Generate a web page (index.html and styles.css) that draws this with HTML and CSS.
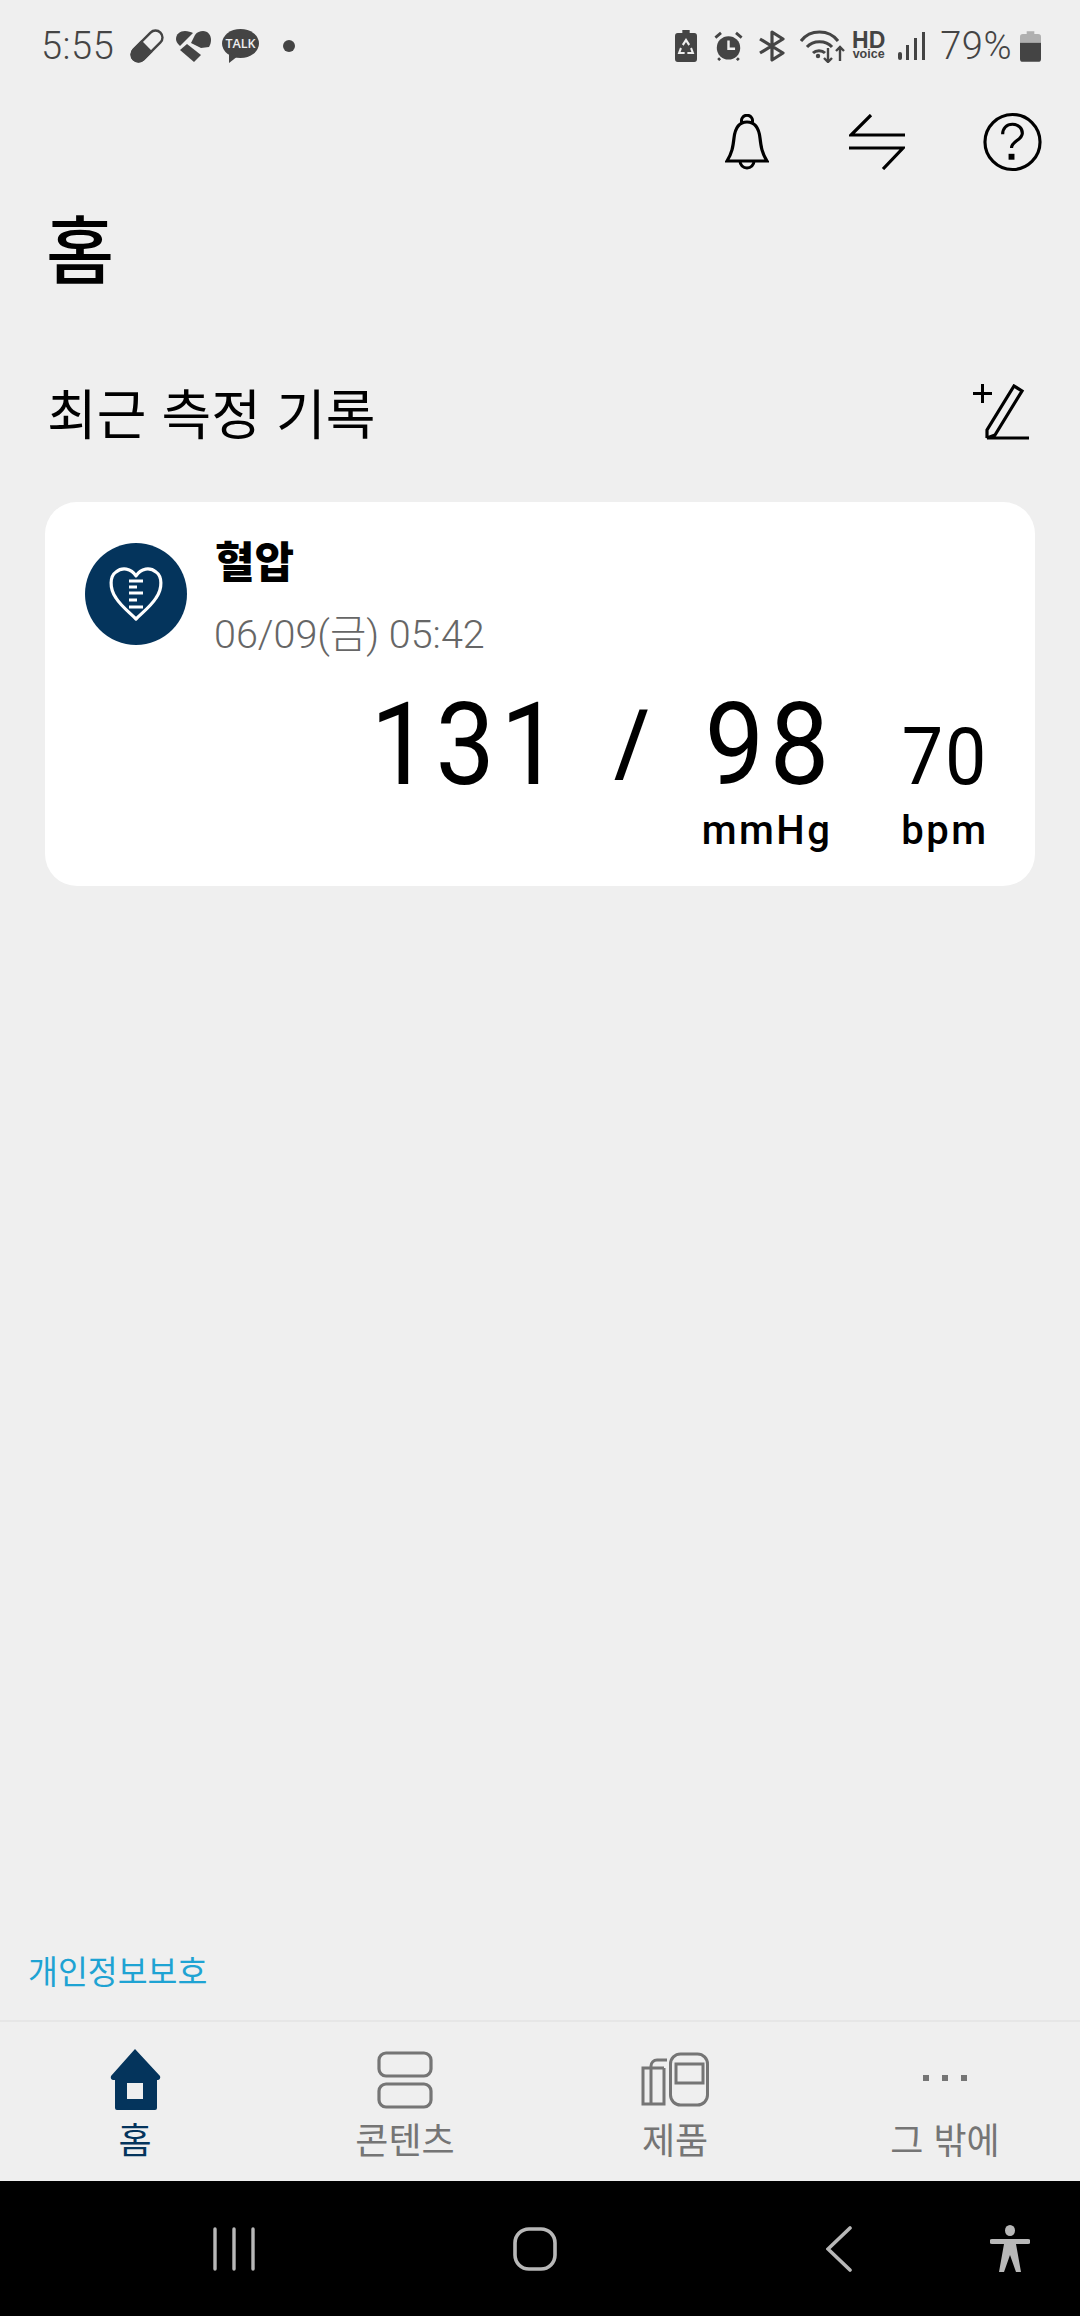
FILE: index.html
```html
<!DOCTYPE html>
<html lang="ko">
<head>
    <meta charset="UTF-8">
    <meta name="viewport" content="width=device-width, initial-scale=1.0">
    <title>홈</title>
    <link rel="stylesheet" href="styles.css">
</head>
<body>
    <div class="screen">
        <div class="status-bar">
            <div class="status-left">
                <span class="status-text">5:55</span>
                <svg class="st-pill" width="34" height="34" viewBox="0 0 34 34">
                    <g transform="rotate(45 17 17)">
                        <rect x="10" y="-2" width="14" height="38" rx="7" fill="none" stroke="#444" stroke-width="2.400"/>
                        <path d="M9 17h16v12a8 8 0 0 1-16 0z" fill="#444"/>
                    </g>
                </svg>
                <svg class="st-heart" width="35" height="31" viewBox="0 0 35 31">
                    <path d="M0 8C0 3 4 0 9 0c3 0 6 1 8 2L4 15C1 12 0 10 0 8z" fill="#444"/>
                    <path d="M19 4c2-3 5-4 8-4 5 0 8 4 8 9 0 3-1 5-2 7l-8 1-10-5z" fill="#444"/>
                    <path d="M4 19l7-6 14 11-7 7z" fill="#444"/>
                </svg>
                <svg class="st-talk" width="37" height="34" viewBox="0 0 37 34">
                    <ellipse cx="18.500" cy="14.500" rx="18.500" ry="14.500" fill="#444"/>
                    <path d="M7 24l0 10 9-7z" fill="#444"/>
                    <text x="18.500" y="19" text-anchor="middle" class="talk-text">TALK</text>
                </svg>
                <span class="st-dot"></span>
            </div>
            <div class="status-right">
                <svg width="22" height="32" viewBox="0 0 24 32" preserveAspectRatio="none">
                    <path d="M8 0h8v3h5a3 3 0 0 1 3 3v23a3 3 0 0 1-3 3H3a3 3 0 0 1-3-3V6a3 3 0 0 1 3-3h5z" fill="#444"/>
                    <path d="M8.500 15l3.500-5 3.500 5M6.500 18l-2 5h6M17.500 18l2 5h-6" fill="none" stroke="#efefef" stroke-width="2.200"/>
                </svg>
                <svg class="st-alarm" width="29" height="30" viewBox="0 0 30 32">
                    <circle cx="15" cy="18" r="12.500" fill="#444"/>
                    <path d="M1 7l6-5M29 7l-6-5M6 29l-2 2M24 29l2 2" stroke="#444" stroke-width="3" fill="none"/>
                    <path d="M15 10v9h7" stroke="#efefef" stroke-width="2.600" fill="none"/>
                </svg>
                <svg class="st-bt" width="26" height="32" viewBox="0 0 26 32">
                    <path d="M1 9l23 14-11 7V2l11 7L1 23" fill="none" stroke="#444" stroke-width="3.200" stroke-linejoin="round"/>
                </svg>
                <svg class="st-wifi" width="45" height="33" viewBox="0 0 45 33">
                    <path d="M1 11c9-12 28-12 37 0M7 17c6-7 19-7 25 0M13 23c3-3 9-3 12 0" fill="none" stroke="#444" stroke-width="3"/>
                    <circle cx="18" cy="26" r="2.200" fill="#444"/>
                    <path d="M28 18v14M24 28l4 4 4-4M40 31V17M36 21l4-4 4 4" fill="none" stroke="#444" stroke-width="2.400"/>
                </svg>
                <span class="hd"><b>HD</b><i>voice</i></span>
                <svg class="st-signal" width="27" height="28" viewBox="0 0 27 28">
                    <rect x="0" y="20" width="4" height="8" rx="2" fill="#444"/>
                    <rect x="8" y="13" width="3" height="15" fill="#444"/>
                    <rect x="16" y="6" width="3" height="22" fill="#444"/>
                    <rect x="24" y="0" width="3" height="28" fill="#444"/>
                </svg>
                <span class="status-text pct">79%</span>
                <svg width="21" height="31" viewBox="0 0 22 32">
                    <path d="M7 0h8v3h4a3 3 0 0 1 3 3v6H0V6a3 3 0 0 1 3-3h4z" fill="#b0b0b0"/>
                    <path d="M0 12h22v17a3 3 0 0 1-3 3H3a3 3 0 0 1-3-3z" fill="#444"/>
                </svg>
            </div>
        </div>

        <div class="top-actions">
            <svg width="44" height="56" viewBox="0 0 44 56">
                <path d="M2 47c5-8 6-14 7-23 1-9 5-16 13-16s12 7 13 16c1 9 2 15 7 23z" fill="none" stroke="#000" stroke-width="3.200"/>
                <path d="M17 9a5.500 5.500 0 1 1 10 0M15 47a7 7 0 0 0 14 0" fill="none" stroke="#000" stroke-width="3"/>
            </svg>
            <svg class="swap-icon" width="56" height="56" viewBox="0 0 56 56">
                <path d="M22 1L2 21h54M0 34h54L34 55" fill="none" stroke="#000" stroke-width="3.200"/>
            </svg>
            <svg width="59" height="60" viewBox="0 0 60 60">
                <circle cx="30" cy="30" r="28" fill="none" stroke="#000" stroke-width="3.200"/>
                <path d="M20 22c0-6 4-10 10-10s10 4 10 9c0 7-11 8-11 15" fill="none" stroke="#000" stroke-width="3.200"/>
                <rect x="26" y="42" width="6" height="6" fill="#000"/>
            </svg>
        </div>

        <h1 class="page-title">홈</h1>

        <div class="section-head">
            <h2>최근 측정 기록</h2>
            <svg width="56" height="56" viewBox="0 0 56 56">
                <path d="M0 9.500h19M9.500 0v19" stroke="#000" stroke-width="3" fill="none"/>
                <path d="M14 54V46L41 2l8 5-27 44-8 3h42" fill="none" stroke="#000" stroke-width="3.200"/>
            </svg>
        </div>

        <div class="card">
            <div class="card-top">
                <div class="badge">
                    <svg width="54" height="56" viewBox="0 0 54 56">
                        <path d="M27 53C20 46 12 40 7 32 0 22 1 10 7 6c6-5 15-4 20 4C32 2 41 1 47 6c6 4 7 16 0 26-5 8-13 14-20 21z" fill="none" stroke="#fff" stroke-width="3.200" stroke-linejoin="round"/>
                        <path d="M20 15h14M20 21h8M20 27h14M20 34h8M20 41h14" stroke="#fff" stroke-width="2.800" fill="none"/>
                    </svg>
                </div>
                <div class="card-info">
                    <div class="card-name">혈압</div>
                    <div class="card-date">06/09(금) 05:42</div>
                </div>
            </div>
            <div class="readings">
                <div class="big systolic">131</div>
                <div class="slash">/</div>
                <div class="reading diastolic">
                    <div class="big">98</div>
                    <div class="unit">mmHg</div>
                </div>
                <div class="reading pulse">
                    <div class="mid">70</div>
                    <div class="unit">bpm</div>
                </div>
            </div>
        </div>

        <div class="spacer"></div>

        <a class="privacy">개인정보보호</a>

        <div class="tab-bar">
            <div class="tab active">
                <svg width="52" height="62" viewBox="0 0 52 62">
                    <path fill-rule="evenodd" d="M26 0l25 27q1 3-2 4h-1v28q0 2-2 2H8q-2 0-2-2V31H4q-3-1-2-4zM18 34v16h16V34z" fill="#04345c"/>
                </svg>
                <span>홈</span>
            </div>
            <div class="tab">
                <svg width="56" height="58" viewBox="0 0 56 58">
                    <rect x="2" y="2" width="52" height="23" rx="7" fill="none" stroke="#757575" stroke-width="3.200"/>
                    <rect x="2" y="33" width="52" height="23" rx="7" fill="none" stroke="#757575" stroke-width="3.200"/>
                </svg>
                <span>콘텐츠</span>
            </div>
            <div class="tab">
                <svg width="68" height="56" viewBox="0 0 68 56">
                    <rect x="29.500" y="2" width="37" height="51" rx="10" fill="none" stroke="#757575" stroke-width="3"/>
                    <rect x="35" y="12" width="27" height="19" fill="none" stroke="#757575" stroke-width="3"/>
                    <path d="M23 16H2v36h21V16M10 16v-2a6 6 0 0 1 6-6h10M10 16v36" fill="none" stroke="#757575" stroke-width="3"/>
                </svg>
                <span>제품</span>
            </div>
            <div class="tab">
                <svg width="56" height="58" viewBox="0 0 56 58">
                    <rect x="6" y="24" width="6" height="6" fill="#757575"/>
                    <rect x="25" y="24" width="6" height="6" fill="#757575"/>
                    <rect x="44" y="24" width="6" height="6" fill="#757575"/>
                </svg>
                <span>그 밖에</span>
            </div>
        </div>

        <div class="nav-bar">
            <svg class="nav-recent" width="44" height="44" viewBox="0 0 44 44">
                <path d="M3 2v40M22 2v40M41 2v40" stroke="#b8b8b8" stroke-width="3.400" stroke-linecap="round"/>
            </svg>
            <svg class="nav-home" width="44" height="44" viewBox="0 0 44 44">
                <rect x="2" y="2" width="40" height="40" rx="14" fill="none" stroke="#b8b8b8" stroke-width="3.600"/>
            </svg>
            <svg class="nav-back" width="26" height="46" viewBox="0 0 26 46">
                <path d="M24 2L2 23l22 21" fill="none" stroke="#b8b8b8" stroke-width="3.600" stroke-linecap="round"/>
            </svg>
            <svg class="nav-a11y" width="40" height="48" viewBox="0 0 40 48">
                <ellipse cx="20" cy="5.500" rx="5" ry="5.500" fill="#b8b8b8"/>
                <path d="M2 14h36a2.500 2.500 0 0 1 0 5H26l5 28h-5l-6-17-6 17H9l5-28H2a2.500 2.500 0 0 1 0-5z" fill="#b8b8b8"/>
            </svg>
        </div>
    </div>
</body>
</html>
```

FILE: styles.css
```css
* {
    box-sizing: border-box;
}

html, body {
    margin: 0;
    padding: 0;
}

body {
    font-family: "Noto Sans CJK KR", "Noto Sans", sans-serif;
    background-color: #efefef;
}

.screen {
    width: 1080px;
    height: 2316px;
    display: flex;
    flex-direction: column;
    background: #efefef;
    overflow: hidden;
}

h1, h2 {
    margin: 0;
    font-weight: 400;
}

/* status bar */
.status-bar {
    height: 90px;
    padding: 2px 39px 0 41px;
    display: flex;
    justify-content: space-between;
    align-items: center;
    color: #444;
}

.status-left, .status-right {
    display: flex;
    align-items: center;
}

.status-text {
    font-family: Roboto, sans-serif;
    font-size: 38px;
    font-weight: 300;
    line-height: 44px;
    letter-spacing: 0.5px;
}

.st-pill {
    margin-left: 16px;
}

.st-heart {
    margin-left: 12px;
}

.st-talk {
    margin-left: 11px;
}

.talk-text {
    font-family: "Open Sans", sans-serif;
    font-size: 12.5px;
    font-weight: 600;
    fill: #efefef;
}

.st-dot {
    width: 12px;
    height: 12px;
    margin-left: 24px;
    border-radius: 50%;
    background: #444;
}

.st-alarm {
    margin-left: 17px;
}

.st-bt {
    margin-left: 16px;
}

.st-wifi {
    margin-left: 15px;
}

.hd {
    margin-left: 7px;
    display: flex;
    flex-direction: column;
    align-items: center;
    font-family: "Liberation Sans", sans-serif;
    line-height: 1;
}

.hd b {
    font-size: 23px;
    height: 17px;
    line-height: 17px;
}

.hd i {
    font-style: normal;
    font-weight: 700;
    font-size: 12.5px;
    line-height: 11px;
}

.st-signal {
    margin-left: 13px;
}

.pct {
    margin: 0 8px 0 15px;
}

/* actions */
.top-actions {
    height: 60px;
    margin-top: 22px;
    padding-right: 38px;
    display: flex;
    justify-content: flex-end;
    align-items: center;
    gap: 79px;
}

.swap-icon {
    margin-left: 1px;
    margin-right: -1px;
}

.page-title {
    margin: 34px 0 0 46px;
    font-size: 74px;
    font-weight: 500;
    line-height: 80px;
    color: #000;
}

.section-head {
    margin-top: 93px;
    padding: 0 51px 0 47px;
    height: 66px;
    display: flex;
    justify-content: space-between;
    align-items: center;
}

.section-head h2 {
    font-size: 54px;
    line-height: 66px;
    color: #000;
}

/* card */
.card {
    margin: 57px 45px 0;
    height: 384px;
    padding: 41px 45px 0 40px;
    background: #fff;
    border-radius: 32px;
}

.card-top {
    display: flex;
    align-items: flex-start;
    gap: 28px;
}

.badge {
    width: 102px;
    height: 102px;
    border-radius: 50%;
    background: #04345c;
    display: flex;
    justify-content: center;
    align-items: center;
}

.card-name {
    margin-top: -11px;
    font-size: 43px;
    font-weight: 900;
    line-height: 54px;
    color: #000;
}

.card-date {
    margin: 24px 0 0 -1px;
    font-family: Roboto, "Noto Sans CJK KR", sans-serif;
    font-size: 39.5px;
    font-weight: 300;
    line-height: 50px;
    color: #666;
}

.readings {
    margin-top: 27px;
    display: flex;
    justify-content: flex-end;
    align-items: flex-start;
    font-family: Roboto, sans-serif;
    color: #000;
}

.big {
    display: flex;
    justify-content: center;
    margin-right: -6px;
    font-size: 115px;
    line-height: 115px;
    letter-spacing: 6px;
    transform: scaleX(0.92);
}

.systolic {
    width: 200px;
}

.slash {
    width: 60px;
    margin: 1px 0 0 40px;
    text-align: center;
    font-size: 90px;
    font-weight: 500;
    line-height: 112px;
}

.reading {
    display: flex;
    flex-direction: column;
    align-items: center;
}

.diastolic {
    width: 130px;
    margin-left: 40px;
}

.pulse {
    width: 90px;
    margin-left: 68px;
}

.mid {
    margin-top: 30px;
    font-size: 80px;
    line-height: 80px;
    letter-spacing: 2px;
    transform: scaleX(0.92);
}

.unit {
    margin-top: 5px;
    font-size: 40px;
    font-weight: 500;
    line-height: 48px;
    letter-spacing: 2.5px;
}

.pulse .unit {
    margin-top: 10px;
}

.spacer {
    flex: 1;
}

.privacy {
    margin-left: 28px;
    margin-bottom: 25px;
    font-size: 32.5px;
    line-height: 50px;
    color: #1ea3d3;
}

/* tabs */
.tab-bar {
    height: 161px;
    border-top: 2px solid #e6e6e6;
    display: grid;
    grid-template-columns: repeat(4, 1fr);
}

.tab {
    padding-top: 27px;
    display: flex;
    flex-direction: column;
    align-items: center;
    font-size: 36px;
    line-height: 42px;
    color: #757575;
}

.tab svg {
    height: 62px;
}

.tab span {
    margin-top: 6px;
}

.tab.active {
    color: #04345c;
}

.nav-bar {
    height: 135px;
    background: #000;
    display: flex;
    align-items: center;
    padding-left: 212px;
}

.nav-home {
    margin-left: 257px;
}

.nav-back {
    margin-left: 269px;
}

.nav-a11y {
    margin-left: 138px;
}
```
